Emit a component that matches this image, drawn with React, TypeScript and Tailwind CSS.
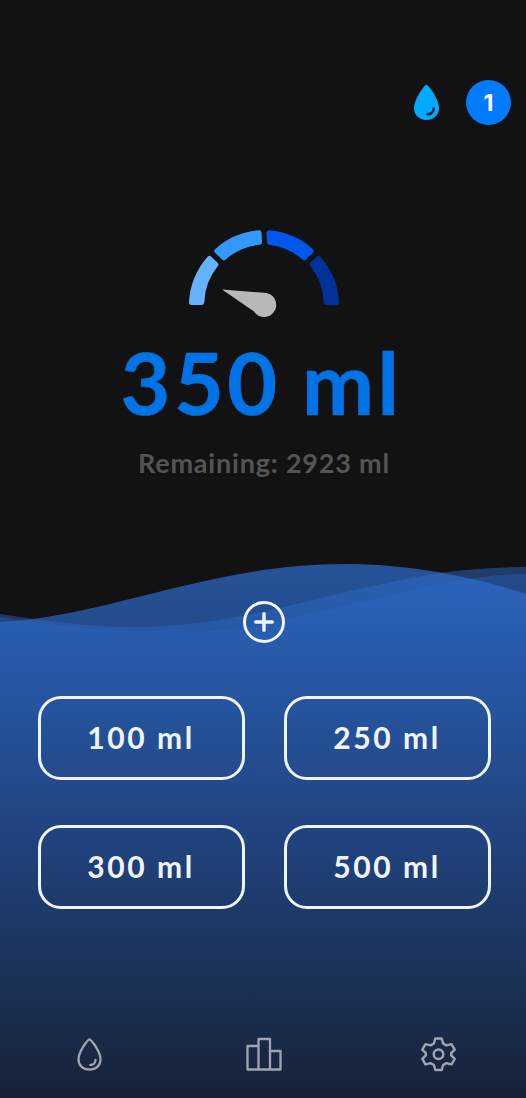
import React, { useState } from 'react';

const amounts = [100, 250, 300, 500];
const goal = 3273;

const Waves: React.FC = () => (
  <svg className="absolute inset-x-0 bottom-0 h-[538px] w-full" viewBox="0 560 526 538" preserveAspectRatio="none">
    <defs>
      <linearGradient id="water" gradientUnits="userSpaceOnUse" x1="0" y1="560" x2="0" y2="1098">
        <stop offset="0" stopColor="#2f71d8" />
        <stop offset="0.5" stopColor="#234b90" />
        <stop offset="1" stopColor="#18243b" />
      </linearGradient>
    </defs>
    <path
      fill="url(#water)"
      fillOpacity="0.3"
      d="M0 617C55 626 120 632 185 632C270 632 360 598 450 582C480 577 504 574 526 574V1098H0Z"
    />
    <path
      fill="url(#water)"
      fillOpacity="0.45"
      d="M0 614C45 621 88 627 132 627C245 627 330 590 440 573C470 569 500 567 526 567V1098H0Z"
    />
    <path
      fill="url(#water)"
      fillOpacity="0.68"
      d="M0 622C110 616 210 564 345 564C410 564 474 577 526 594V1098H0Z"
    />
  </svg>
);

const Gauge: React.FC = () => (
  <svg className="h-[90px] w-[152px]" viewBox="188 229 152 90">
    <g strokeWidth="5" strokeLinejoin="round">
      <path fill="#66b2ff" stroke="#66b2ff" d="M191.500 302.500A72.500 72.500 0 0 1 209.500 258.500L216 264.500A62 62 0 0 0 201.800 302.500Z" />
      <path fill="#3399ff" stroke="#3399ff" d="M216.800 251A72.500 72.500 0 0 1 259 232.800L259.500 242.200A62 62 0 0 0 223.800 257.800Z" />
      <path fill="#0057eb" stroke="#0057eb" d="M269 232.800A72.500 72.500 0 0 1 311.200 251L304.200 257.800A62 62 0 0 0 269.500 242.200Z" />
      <path fill="#003399" stroke="#003399" d="M318.500 258.500A72.500 72.500 0 0 1 336.500 302.500L326.200 302.500A62 62 0 0 0 312 264.500Z" />
    </g>
    <path fill="#b8b8b8" d="M222 289.500L264 292.800A12.100 12.100 0 1 1 254 311.500Z" />
  </svg>
);

const App: React.FC = () => {
  const [current, setCurrent] = useState(350);

  return (
    <div className="relative flex h-[1098px] w-[526px] flex-col overflow-hidden bg-[#121212] font-['Lato',sans-serif]">
      <Waves />

      <header className="relative flex h-[125px] items-end justify-end gap-[26px] pr-[15px]">
        <svg className="mb-1 h-[37px] w-[27px]" viewBox="0 0 27 37">
          <path fill="#00aaff" d="M13.500 0.800C11.400 0.800 1 15.500 1 24.300C1 31.300 6.500 36 13.500 36S26 31.300 26 24.300C26 15.500 15.600 0.800 13.500 0.800Z" />
          <path fill="none" stroke="#12263c" strokeWidth="2.600" strokeLinecap="round" d="M20.800 24.500C20.800 28 18.200 30.200 14.500 30.200" />
        </svg>
        <div className="flex h-[45px] w-[45px] items-center justify-center rounded-full bg-[#007aff] pt-0.5 font-['Inter',sans-serif] text-[23px] font-bold text-white">
          1
        </div>
      </header>

      <section className="relative flex h-[476px] flex-col items-center pt-[104px] pl-[2px]">
        <Gauge />
        <h1 className="mt-[19px] whitespace-nowrap pr-[5px] text-[86px] font-bold leading-[88px] tracking-[3.5px] text-[#0073e6] [word-spacing:-3px] [-webkit-text-stroke:0.6px_#0073e6]">
          {current} ml
        </h1>
        <p className="mt-[21px] whitespace-nowrap text-[27px] font-bold leading-8 tracking-[0.8px] text-[#545454]">
          Remaining: {goal - current} ml
        </p>
      </section>

      <main className="relative flex flex-col items-center pl-[2px]">
        <button aria-label="Add amount" className="h-[42px] w-[42px]">
          <svg className="h-[42px] w-[42px]" viewBox="0 0 42 42" fill="none" stroke="#f0f5ff" strokeLinecap="round">
            <circle cx="21" cy="21" r="19.500" strokeWidth="3" />
            <path strokeWidth="3.400" d="M21 12.800V29.200M12.800 21H29.200" />
          </svg>
        </button>
        <div className="mt-[53px] grid grid-cols-2 gap-x-[39px] gap-y-[45px]">
          {amounts.map((amount) => (
            <button
              key={amount}
              onClick={() => setCurrent(current + amount)}
              className="h-[84px] w-[207px] rounded-[23px] border-[3px] border-[#eff5ff] pb-0.5 text-[30px] font-bold tracking-[2.6px] text-[#eff5ff]"
            >
              {amount} ml
            </button>
          ))}
        </div>
      </main>

      <nav className="relative mt-auto flex h-[88px] justify-around pl-[3px] text-[#a0a5b1]">
        <svg className="h-[88px] w-[60px]" viewBox="60 1010 60 88" fill="none" stroke="currentColor" strokeWidth="2.300" strokeLinecap="round" strokeLinejoin="round">
          <path d="M89.500 1039.300C88 1039.300 78.500 1051.500 78.500 1059.300C78.500 1065.800 83.200 1069.700 89.500 1069.700S100.500 1065.800 100.500 1059.300C100.500 1051.500 91 1039.300 89.500 1039.300Z" />
          <path d="M95.500 1060C95.500 1063 93.300 1065 90.300 1065" />
        </svg>
        <svg className="h-[88px] w-[60px]" viewBox="234 1010 60 88" fill="none" stroke="currentColor" strokeWidth="2.300" strokeLinejoin="round">
          <path d="M247.500 1069.500V1046H258.500V1069.500ZM258.500 1069.500V1039H270V1069.500ZM270 1069.500V1051H280.500V1069.500Z" />
        </svg>
        <svg className="h-[88px] w-[60px]" viewBox="409 1010 60 88" fill="none" stroke="currentColor" strokeWidth="2.400" strokeLinejoin="round">
          <path d="M435.300 1038.500H441.700L443.100 1043.500L446.400 1045.400L451.500 1044.100L454.700 1049.600L451.200 1053.200V1055.300L454.700 1058.900L451.500 1064.400L446.400 1063.100L443.100 1065L441.700 1070H435.300L433.900 1065L430.600 1063.100L425.500 1064.400L422.300 1058.900L425.800 1055.300V1053.200L422.300 1049.600L425.500 1044.100L430.600 1045.400L433.900 1043.500Z" />
          <circle cx="438.500" cy="1054.250" r="4.800" />
        </svg>
      </nav>
    </div>
  );
};

export default App;
